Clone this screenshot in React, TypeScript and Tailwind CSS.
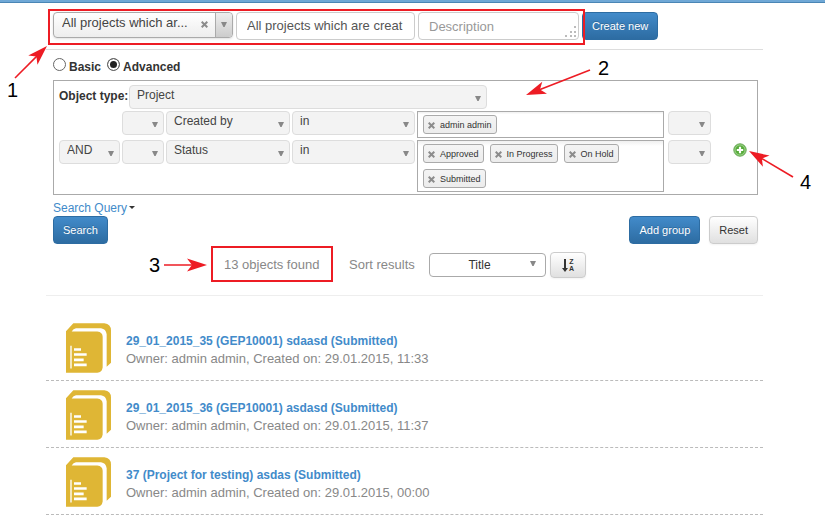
import React from "react";
import clsx from "clsx";

const SELECT =
  "block h-6 w-full appearance-none rounded border border-[#ddd] bg-[#f3f3f3] pb-1 pl-[7px] pr-4 text-xs text-[#444] outline-none";
const PRIMARY =
  "h-7 rounded-sm border border-[#2d6ca2] bg-linear-to-b from-[#428bca] to-[#2d6ca2] px-[9px] text-[11px] text-white [text-shadow:0_-1px_0_rgba(0,0,0,0.2)]";
const PLAIN =
  "rounded-sm border border-[#ccc] bg-linear-to-b from-white to-[#e0e0e0] text-[#333] shadow-xs";

function Triangle({ className }: { className?: string }) {
  return (
    <svg viewBox="0 0 6 5" className={clsx("pointer-events-none absolute h-[5px] w-1.5 fill-[#888]", className)} aria-hidden="true">
      <path d="M0 0H6L3.6 5H2.4Z" />
    </svg>
  );
}

function Cross({ className }: { className?: string }) {
  return (
    <svg viewBox="0 0 7 7" className={clsx("size-[7px] stroke-[#8c8c8c] stroke-2", className)} aria-hidden="true">
      <path d="M0.7 0.7L6.3 6.3M6.3 0.7L0.7 6.3" />
    </svg>
  );
}

function Picker({ label, value = "", className }: { label: string; value?: string; className?: string }) {
  return (
    <div className={clsx("relative", className)}>
      <select aria-label={label} className={SELECT}>
        <option>{value}</option>
      </select>
      <Triangle className="right-1.5 top-[11px]" />
    </div>
  );
}

function Tags({ items, label }: { items: string[]; label: string }) {
  return (
    <div
      role="group"
      aria-label={label}
      className="mr-0.5 flex flex-wrap gap-x-1.5 gap-y-1.5 border border-[#aaa] bg-linear-to-b from-[#f0f0f0] to-white to-10% px-[5px] py-[3px]"
    >
      {items.map((item) => (
        <span
          key={item}
          className="flex h-[19px] items-center gap-[5px] rounded-[3px] border border-[#aaa] bg-linear-to-b from-[#f4f4f4] to-[#ececec] px-1 text-[9px] text-[#333]"
        >
          <button type="button" aria-label={`Remove ${item}`} className="pt-0.5">
            <Cross />
          </button>
          {item}
        </span>
      ))}
    </div>
  );
}

const ROW = "grid grid-cols-[61px_42px_124px_123px_1fr_43px_39px] items-start gap-x-0.5";

function Criterion({ field, tags, join, add }: { field: string; tags: string[]; join?: string; add?: boolean }) {
  return (
    <div className={ROW}>
      {join ? <Picker label="Join" value={join} /> : <span />}
      <Picker label="Bracket before" />
      <Picker label="Field" value={field} />
      <Picker label="Operator" value="in" />
      <Tags label={`${field} values`} items={tags} />
      <Picker label="Bracket after" />
      {add ? (
        <button type="button" aria-label="Add criterion" className="ml-auto mr-[5px] mt-[3px]">
          <svg viewBox="0 0 14 14" className="size-3.5">
            <circle cx="7" cy="7" r="6.2" fill="#6fba55" stroke="#69a957" />
            <circle cx="7" cy="7" r="5" fill="#55ab38" stroke="#b4dea6" strokeWidth="0.7" />
            <path d="M7 3.8V10.2M3.8 7H10.2" stroke="#fff" strokeWidth="2.2" />
          </svg>
        </button>
      ) : (
        <span />
      )}
    </div>
  );
}

function ProjectIcon() {
  return (
    <svg viewBox="0 0 135 149" className="h-[50px] w-[45px] shrink-0" aria-hidden="true">
      <path
        fill="#dfb635"
        d="M0 24L22 0H115Q135 2 135 22V119L122 131V33Q120 17 105 15H30Q22 16 17 25H94Q110 27 110 41V133Q108 147 94 149H0Z"
      />
      <path fill="#fff" d="M13 68h4v68h-4zM24 75h21v8h-21zM24 90h38v8h-38zM24 106h29v8h-29zM24 121h38v8h-38z" />
    </svg>
  );
}

const RESULTS = [
  { title: "29_01_2015_35 (GEP10001) sdaasd (Submitted)", time: "11:33" },
  { title: "29_01_2015_36 (GEP10001) asdasd (Submitted)", time: "11:37" },
  { title: "37 (Project for testing) asdas (Submitted)", time: "00:00" },
];

function Arrow({ x1, y1, x2, y2 }: { x1: number; y1: number; x2: number; y2: number }) {
  const angle = (Math.atan2(y2 - y1, x2 - x1) * 180) / Math.PI;
  return (
    <g stroke="#ed1c24" strokeWidth="1.6" fill="#ed1c24">
      <line x1={x1} y1={y1} x2={x2 - (x2 - x1) * 0.2} y2={y2 - (y2 - y1) * 0.2} />
      <path stroke="none" d="M0 0L-20 -6.5L-15 0L-20 6.5Z" transform={`translate(${x2} ${y2}) rotate(${angle})`} />
    </g>
  );
}

function Callouts() {
  return (
    <div className="pointer-events-none absolute left-0 top-0 text-xl leading-6 text-black">
      <svg className="absolute left-0 top-0 h-[518px] w-[825px]" aria-hidden="true">
        <Arrow x1={15} y1={78} x2={47} y2={46} />
        <Arrow x1={590} y1={70} x2={526} y2={95} />
        <Arrow x1={164} y1={265} x2={207} y2={265} />
        <Arrow x1={793} y1={177} x2={749} y2={151} />
        <g fill="none" stroke="#ed1c24" strokeWidth="2">
          <rect x="49" y="10" width="535" height="34" />
          <rect x="212" y="247" width="120" height="34" />
        </g>
      </svg>
      <span className="absolute left-[7px] top-[78px]">1</span>
      <span className="absolute left-[598px] top-[56px]">2</span>
      <span className="absolute left-[149px] top-[253px]">3</span>
      <span className="absolute left-[800px] top-[170px]">4</span>
    </div>
  );
}

export default function App() {
  return (
    <div className="relative min-h-screen overflow-hidden bg-white font-['Liberation_Sans',Arial,sans-serif] text-xs text-[#333]">
      <div className="h-[3px] border-b border-[#4a86b5] bg-[#6fa8d6]" />
      <main className="pl-[46px] pr-[62px]">
        <div className="flex items-start gap-[3px] border-b border-[#ddd] px-[7px] pb-[9px] pt-[9px]">
          <div className="relative w-[180px]">
            <select
              aria-label="Saved search"
              className="block h-[26px] w-full appearance-none rounded border border-[#aaa] bg-linear-to-b from-white to-[#ededed] pb-1 pl-2 text-[13px] text-[#444] shadow-sm outline-none"
            >
              <option>All projects which ar...</option>
            </select>
            <button type="button" aria-label="Clear" className="absolute right-[25px] top-[9px]">
              <Cross />
            </button>
            <span className="pointer-events-none absolute bottom-px right-px top-px w-[17px] rounded-r border-l border-[#aaa] bg-linear-to-b from-[#eee] to-[#ccc]" />
            <Triangle className="right-1.5 top-2.5" />
          </div>
          <input
            aria-label="Name"
            size={1}
            defaultValue="All projects which are creat"
            className="h-7 w-[179px] rounded border border-[#ccc] px-2.5 pb-0.5 text-[13px] text-[#555] outline-none"
          />
          <div className="relative w-[161px]">
            <textarea
              aria-label="Description"
              placeholder="Description"
              className="block h-7 w-full resize-none overflow-hidden rounded border border-[#ccc] px-2.5 pt-1 text-[13px] leading-5 outline-none placeholder:text-[#999]"
            />
            <svg viewBox="0 0 12 12" className="absolute bottom-0.5 right-0.5 size-3 fill-[#bbb]" aria-hidden="true">
              <path d="M9 0h2v2h-2zM5 5h2v2h-2zM9 5h2v2h-2zM0 9h2v2h-2zM5 9h2v2h-2zM9 9h2v2h-2z" />
            </svg>
          </div>
          <button type="button" className={PRIMARY}>
            Create new
          </button>
        </div>

        <form className="pl-[7px] pr-[5px]" onSubmit={(e) => e.preventDefault()}>
          <fieldset className="flex h-[30px] items-center gap-1.5 pt-[3px] font-bold">
            <label className="flex items-center gap-[3px]">
              <input type="radio" name="mode" className="mb-1 size-[13px] appearance-none rounded-full border border-[#666] bg-white checked:bg-[#222] checked:shadow-[inset_0_0_0_2px_white]" />
              Basic
            </label>
            <label className="flex items-center gap-[3px]">
              <input
                type="radio"
                name="mode"
                defaultChecked
                className="mb-1 size-[13px] appearance-none rounded-full border border-[#666] bg-white checked:bg-[#222] checked:shadow-[inset_0_0_0_2px_white]"
              />
              Advanced
            </label>
          </fieldset>

          <div className="flex flex-col border border-[#aaa] px-[5px] pb-0.5 pt-1">
            <div className="mb-0.5 flex items-center gap-0.5">
              <label htmlFor="objectType" className="w-[68px] whitespace-nowrap pb-0.5 font-bold">
                Object type:
              </label>
              <div className="relative w-[358px]">
                <select id="objectType" className={SELECT}>
                  <option>Project</option>
                </select>
                <Triangle className="right-1.5 top-[11px]" />
              </div>
            </div>
            <div className="flex flex-col gap-0.5">
              <Criterion field="Created by" tags={["admin admin"]} />
              <Criterion field="Status" join="AND" add tags={["Approved", "In Progress", "On Hold", "Submitted"]} />
            </div>
          </div>

          <div className="flex h-[21px] items-center pt-1">
            <a href="#query" className="flex items-center gap-0.5 text-[#428bca]">
              Search Query
              <svg viewBox="0 0 6 3" className="h-[3px] w-1.5 fill-[#333]" aria-hidden="true">
                <path d="M0 0H6L3 3Z" />
              </svg>
            </a>
          </div>
          <div className="flex gap-[9px]">
            <button type="submit" className={clsx(PRIMARY, "mr-auto")}>
              Search
            </button>
            <button type="button" className={PRIMARY}>
              Add group
            </button>
            <button type="reset" className={clsx(PLAIN, "h-7 px-[9px] text-[11px]")}>
              Reset
            </button>
          </div>
        </form>

        <div className="flex items-center border-b border-[#eee] pb-[17px] pl-[178px] pt-2 text-[13px] text-[#888]">
          <span className="w-[125px]">13 objects found</span>
          <label htmlFor="sort" className="w-20">
            Sort results
          </label>
          <div className="relative w-[117px]">
            <select
              id="sort"
              className="block h-6 w-full appearance-none rounded border border-[#aaa] bg-white pr-4 text-center text-xs text-[#333] outline-none [text-align-last:center]"
            >
              <option>Title</option>
            </select>
            <Triangle className="right-2.5 top-2" />
          </div>
          <button type="button" aria-label="Sort order" className={clsx(PLAIN, "ml-1 flex h-[26px] w-9 items-center justify-center gap-px")}>
            <svg viewBox="0 0 6 13" className="h-[13px] w-1.5" aria-hidden="true">
              <path d="M2 0H4V9H6L3 13L0 9H2Z" fill="#333" />
            </svg>
            <span className="flex flex-col text-[7px] font-bold leading-[7px]">
              <span>Z</span>
              <span>A</span>
            </span>
          </button>
        </div>

        <ul className="pt-[18px]">
          {RESULTS.map((r) => (
            <li key={r.title} className="flex gap-[15px] border-b border-dashed border-[#bbb] pb-[7px] pl-5 pt-[9px]">
              <ProjectIcon />
              <div className="pt-[9px]">
                <a href="#project" className="block font-bold leading-[18px] text-[#428bca]">
                  {r.title}
                </a>
                <p className="text-[13px] leading-[18px] text-[#888]">Owner: admin admin, Created on: 29.01.2015, {r.time}</p>
              </div>
            </li>
          ))}
        </ul>
      </main>
      <Callouts />
    </div>
  );
}
